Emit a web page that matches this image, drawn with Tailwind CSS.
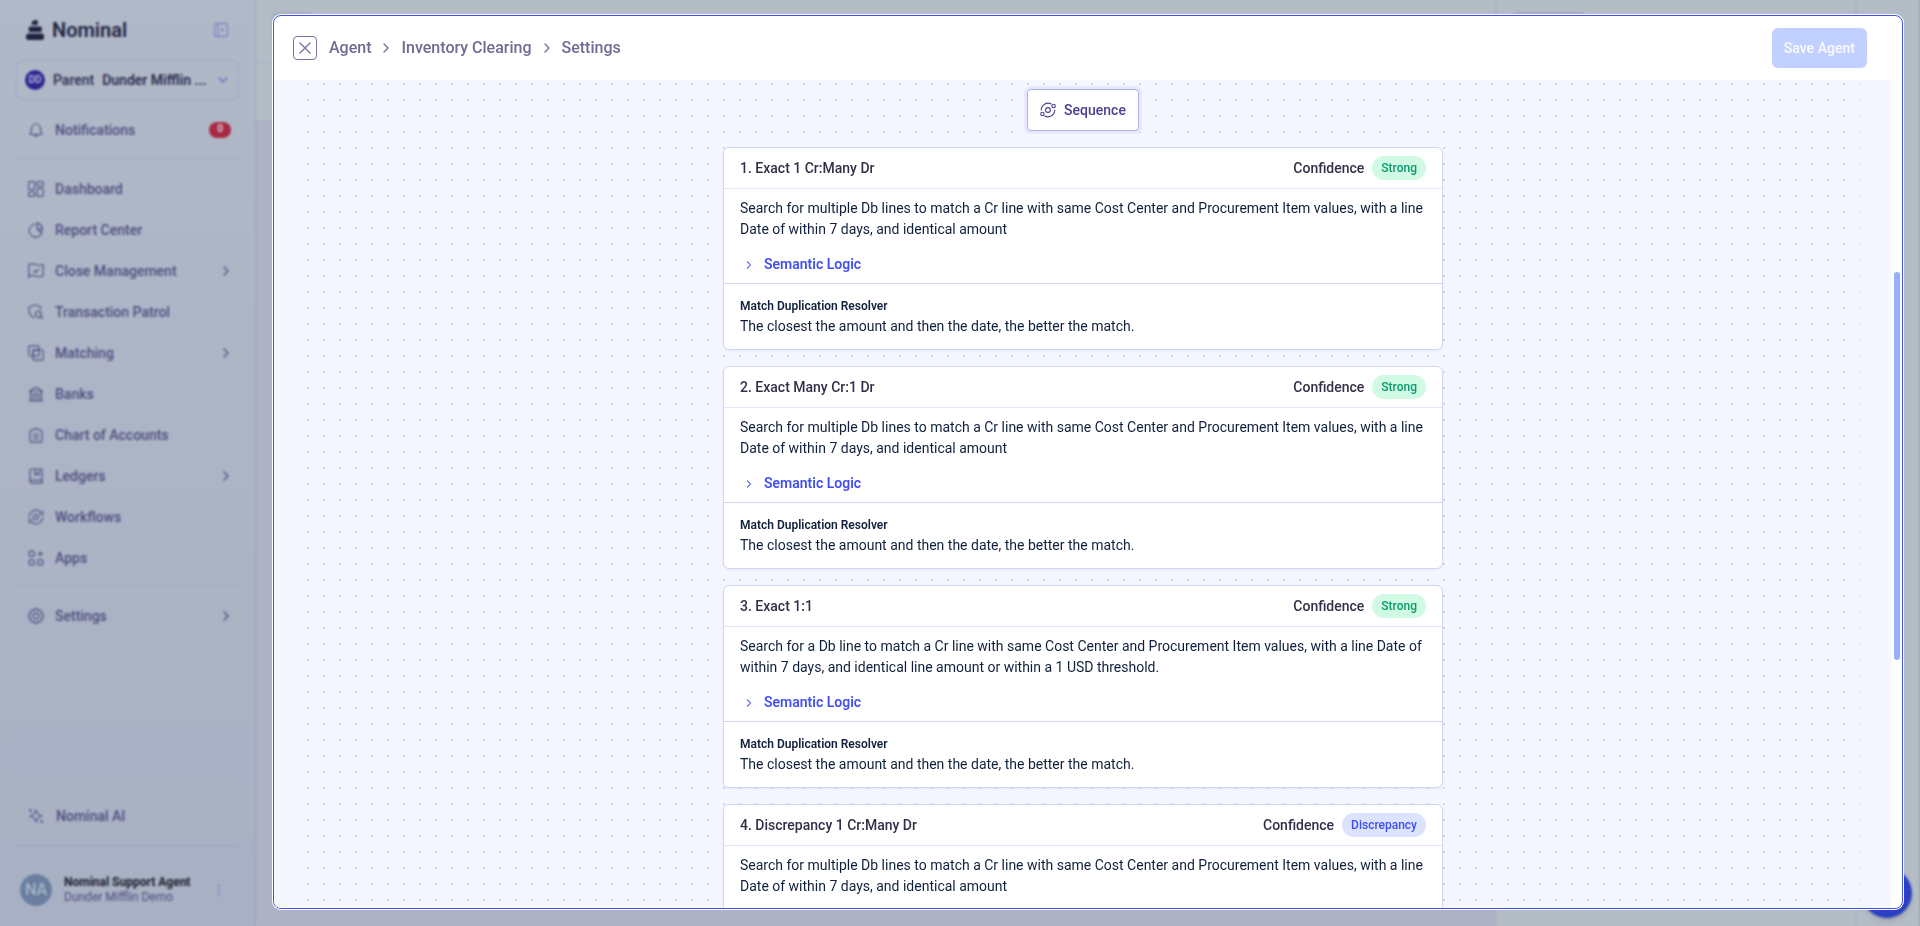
<!DOCTYPE html>
<html lang="en">
<head>
<meta charset="utf-8">
<meta name="viewport" content="width=device-width, initial-scale=1">
<title>Nominal – Agent Settings</title>
<script src="https://cdn.jsdelivr.net/npm/@tailwindcss/browser@4"></script>
</head>
<body class="relative flex h-screen overflow-hidden bg-[#b4bcc6] font-['Roboto','Liberation_Sans',sans-serif] text-sm">

<!-- Shared icon shapes -->
<svg class="hidden" aria-hidden="true">
  <symbol id="chev" viewBox="0 0 6 10"><path d="M1 1l4 4-4 4" fill="none" stroke="currentColor" stroke-width="1.3" stroke-linecap="round" stroke-linejoin="round"/></symbol>
  <symbol id="orbit" viewBox="0 0 16 16"><g fill="none" stroke="currentColor" stroke-width="1.1" stroke-linecap="round"><circle cx="8" cy="8" r="2.4"/><circle cx="13.6" cy="4" r="1.7"/><circle cx="2.4" cy="12" r="1.7"/><path d="M1.200 8A6.900 6.900 0 0 1 11.300 2M14.800 8A6.900 6.900 0 0 1 4.700 14"/></g></symbol>
</svg>

<!-- Sidebar -->
<aside class="flex w-64 shrink-0 flex-col border-r border-[#98a3c4] bg-linear-to-b from-[#b0b9c8] to-[#a8b0c3] px-4 text-[#4f4f80]">
  <div class="flex h-[60px] items-center justify-between px-2.5">
    <div class="flex items-center gap-2 text-[#21233f]">
      <svg class="h-5 w-[18px]" viewBox="0 0 18 20" fill="currentColor" aria-hidden="true"><path d="M7.200 .6 10 0Q12 0 12 2v1q0 2-2 2H7.500Q5.500 5 5.500 3.500T7.200.6z"/><rect x="2.500" y="6.500" width="13.500" height="5.500" rx="2.200"/><rect x="0" y="13.500" width="18" height="6.500" rx="2.500"/></svg>
      <span class="text-xl font-semibold">Nominal</span>
    </div>
    <button type="button" aria-label="Collapse sidebar" class="text-[#8083c4]"><svg class="size-4" viewBox="0 0 16 16" fill="none" stroke="currentColor" stroke-width="1.3"><rect x="1.500" y="1.500" width="13" height="13" rx="1.500"/><path d="M5 1.500v13M10.500 6 8.500 8l2 2"/></svg></button>
  </div>

  <button type="button" class="flex h-10 items-center rounded-md border border-[#9da7cb] px-2 text-left text-[#2c2c4c]">
    <span class="grid size-5 place-items-center rounded-full bg-[#2e2690] text-[10px] font-medium text-[#b9bede]">DD</span>
    <span class="ml-2 font-medium">Parent</span>
    <span class="ml-2 grow font-semibold">Dunder Mifflin ...</span>
    <svg class="mr-0.5 h-2 w-2.5 text-[#6668b8]" viewBox="0 0 10 8" fill="none" stroke="currentColor" stroke-width="1.400" stroke-linecap="round" aria-hidden="true"><path d="M1 2l4 4 4-4"/></svg>
  </button>

  <a href="#" class="mt-[9px] flex h-[41px] items-center gap-[11px] pr-2 pl-3 font-medium">
    <svg class="size-4" viewBox="0 0 16 16" fill="none" stroke="currentColor" stroke-width="1.200" stroke-linejoin="round" aria-hidden="true"><path d="M2 12.500c1.300-1.400 1.500-2.500 1.500-6a4.500 4.500 0 0 1 9 0c0 3.500.2 4.600 1.500 6zM6.500 13c.3 1.700 2.700 1.700 3 0"/></svg>
    <span class="grow">Notifications</span>
    <span class="grid h-4 w-[22px] place-items-center rounded-full bg-[#a82944] text-[10px] font-bold text-[#d5c6d3]">0</span>
  </a>

  <hr class="mt-2 mb-[9px] border-[#9da9c7]">

  <nav class="flex flex-col font-medium">
    <a href="#" class="flex h-[41px] items-center gap-[11px] pr-2.5 pl-3">
      <svg class="size-4" viewBox="0 0 16 16" fill="none" stroke="currentColor" stroke-width="1.200" aria-hidden="true"><rect x=".6" y=".6" width="6" height="8" rx="1"/><rect x=".6" y="11" width="6" height="4.400" rx="1"/><rect x="9.200" y=".6" width="6" height="4.400" rx="1"/><rect x="9.200" y="7.400" width="6" height="8" rx="1"/></svg>
      <span>Dashboard</span></a>
    <a href="#" class="flex h-[41px] items-center gap-[11px] pr-2.5 pl-3">
      <svg class="size-4" viewBox="0 0 16 16" fill="none" stroke="currentColor" stroke-width="1.200" stroke-linejoin="round" aria-hidden="true"><path d="M7 2.200a6.500 6.500 0 1 0 7 8.300"/><path d="M9 .8V7l4 3.500A6.200 6.200 0 0 0 9 .8zM9 7h6"/></svg>
      <span>Report Center</span></a>
    <a href="#" class="flex h-[41px] items-center gap-[11px] pr-2.5 pl-3">
      <svg class="size-4" viewBox="0 0 16 16" fill="none" stroke="currentColor" stroke-width="1.200" stroke-linejoin="round" aria-hidden="true"><path d="M.8 15.500V1.500c2.500-1 4.700-.8 7 0s4.800.8 7.400 0v11.500c-2.500.8-5 .8-7.400 0s-4.500-.8-7 0M5.500 7.500l2 2L11 5.800"/></svg>
      <span class="grow">Close Management</span><svg class="h-2.5 w-1.5"><use href="#chev"/></svg></a>
    <a href="#" class="flex h-[41px] items-center gap-[11px] pr-2.5 pl-3">
      <svg class="size-4" viewBox="0 0 16 16" fill="none" stroke="currentColor" stroke-width="1.200" stroke-linejoin="round" aria-hidden="true"><path d="M6.500 14C3 12.500 1.200 10 1.200 6.500V3L7 .8 12.800 3v2.500"/><circle cx="10.300" cy="10.300" r="3"/><path d="m12.500 12.500 2.500 2.500"/></svg>
      <span>Transaction Patrol</span></a>
    <a href="#" class="flex h-[41px] items-center gap-[11px] pr-2.5 pl-3">
      <svg class="size-4" viewBox="0 0 16 16" fill="none" stroke="currentColor" stroke-width="1.200" aria-hidden="true"><path d="M5 11H2a1.200 1.200 0 0 1-1.200-1.200V2A1.200 1.200 0 0 1 2 .8h7.800A1.200 1.200 0 0 1 11 2v3"/><rect x="5" y="5" width="10.200" height="10.200" rx="1.200"/><rect x="5" y="5" width="6" height="6"/></svg>
      <span class="grow">Matching</span><svg class="h-2.5 w-1.5"><use href="#chev"/></svg></a>
    <a href="#" class="flex h-[41px] items-center gap-[11px] pr-2.5 pl-3">
      <svg class="size-4" viewBox="0 0 16 16" fill="none" stroke="currentColor" stroke-width="1.200" stroke-linejoin="round" aria-hidden="true"><path d="M1.500 5 8 1.200 14.500 5zM1 14.800h14M2.500 5v9.500M5 7v7M8 7v7M11 7v7M13.500 5v9.500M6.500 8.500h3"/></svg>
      <span>Banks</span></a>
    <a href="#" class="flex h-[41px] items-center gap-[11px] pr-2.5 pl-3">
      <svg class="size-4" viewBox="0 0 16 16" fill="none" stroke="currentColor" stroke-width="1.200" stroke-linejoin="round" aria-hidden="true"><path d="M2 4.500 5 2.500h1.500a1.600 1.600 0 0 1 3 0H11l3 2v9.700a1 1 0 0 1-1 1H3a1 1 0 0 1-1-1zM5 7h6M5 9.500h6M5 12h6"/></svg>
      <span>Chart of Accounts</span></a>
    <a href="#" class="flex h-[41px] items-center gap-[11px] pr-2.5 pl-3">
      <svg class="size-4" viewBox="0 0 16 16" fill="none" stroke="currentColor" stroke-width="1.200" stroke-linejoin="round" aria-hidden="true"><path d="M14 12.200V1H4a2 2 0 0 0-2 2v10.500M14 12.200H3.600a1.500 1.500 0 0 0 0 3H14zM7 1v6l2-1.500L11 7V1"/></svg>
      <span class="grow">Ledgers</span><svg class="h-2.5 w-1.5"><use href="#chev"/></svg></a>
    <a href="#" class="flex h-[41px] items-center gap-[11px] pr-2.5 pl-3">
      <svg class="size-4"><use href="#orbit"/></svg>
      <span>Workflows</span></a>
    <a href="#" class="flex h-[41px] items-center gap-[11px] pr-2.5 pl-3">
      <svg class="size-4" viewBox="0 0 16 16" fill="none" stroke="currentColor" stroke-width="1.200" aria-hidden="true"><rect x="1.200" y="1.200" width="5" height="5" rx="1"/><rect x="1.200" y="9.800" width="5" height="5" rx="1"/><rect x="9.800" y="9.800" width="5" height="5" rx="1"/><path d="M12.300 1.300v5M9.800 3.800h5"/></svg>
      <span>Apps</span></a>
    <hr class="mt-[7px] mb-[9px] border-[#9da9c7]">
    <a href="#" class="flex h-[41px] items-center gap-[11px] pr-2.5 pl-3">
      <svg class="size-4" viewBox="0 0 16 16" fill="none" stroke="currentColor" stroke-width="1.200" stroke-linejoin="round" aria-hidden="true"><path d="M6.500.8h3l.6 1.900 1.900-.7 2 2-.7 1.900 1.900.6v3l-1.900.6.7 1.900-2 2-1.900-.7-.6 1.900h-3l-.6-1.900-1.900.7-2-2 .7-1.900-1.900-.6v-3l1.900-.6-.7-1.900 2-2 1.900.7z"/><circle cx="8" cy="8" r="2.800"/></svg>
      <span class="grow">Settings</span><svg class="h-2.5 w-1.5"><use href="#chev"/></svg></a>
  </nav>

  <a href="#" class="mt-auto flex h-[41px] items-center gap-3 px-3 font-medium">
    <svg class="size-4" viewBox="0 0 16 16" fill="none" stroke="currentColor" stroke-width="1.200" stroke-linejoin="round" aria-hidden="true"><path d="M8 2c.6 3.600 2 5 6 6-4 1-5.400 2.400-6 6-.6-3.600-2-5-6-6 4-1 5.400-2.400 6-6zM2.500 1v3M1 2.500h3M13.500 12v3M12 13.500h3"/></svg>
    <span>Nominal AI</span></a>
  <hr class="mt-[9px] border-[#9ba3c3]">
  <div class="flex items-center gap-3 px-1 pt-7 pb-5">
    <span class="grid size-8 place-items-center rounded-full bg-[#6a7fa0] text-base text-[#b3bfd0]">NA</span>
    <div class="grow text-xs/[15px]">
      <p class="font-bold text-[#1d1e30]">Nominal Support Agent</p>
      <p>Dunder Mifflin Demo</p>
    </div>
    <button type="button" aria-label="Account menu" class="mr-3.5 text-[#6f70c0]"><svg class="h-3 w-1" viewBox="0 0 4 12" fill="currentColor"><circle cx="2" cy="1.500" r="1"/><circle cx="2" cy="6" r="1"/><circle cx="2" cy="10.500" r="1"/></svg></button>
  </div>
</aside>

<!-- Page behind the dialog -->
<div class="flex grow" aria-hidden="true">
  <div class="flex grow flex-col">
    <div class="h-[63px] border-b border-[#a9b1c6] pt-3 pl-4"><div class="h-8 w-10 rounded bg-[#a9b1c0]"></div></div>
    <div class="h-[58px] border-b border-[#a9b1c6]"></div>
    <div class="grow bg-[#adb3c3]"></div>
  </div>
  <div class="w-[362px] border-x-2 border-[#a9b1c6] pt-3 pl-4"><div class="h-8 w-[72px] rounded bg-[#a3acc2]"></div></div>
  <div class="w-[63px] border-r border-[#9ba4bb]"></div>
</div>
<div class="absolute right-2 bottom-2 size-[50px] rounded-full bg-[#2b40c2] shadow-md"></div>

<!-- Overlay -->
<div class="absolute inset-0 backdrop-blur-[1px]"></div>

<!-- Dialog -->
<section role="dialog" aria-label="Agent settings" class="absolute top-[15px] right-[17px] bottom-[17px] left-[273px] flex flex-col overflow-hidden rounded-lg border border-[#3f50f0] bg-white ring-1 ring-white">
  <header class="flex h-16 shrink-0 items-center justify-between pr-[35px] pl-[19px]">
    <div class="flex items-center gap-3">
      <button type="button" aria-label="Close" class="grid size-6 place-items-center rounded border border-[#7c74a5] text-[#7c74a5]"><svg class="size-3" viewBox="0 0 12 12" fill="none" stroke="currentColor" stroke-width="1.400" stroke-linecap="round"><path d="M1 1l10 10M11 1 1 11"/></svg></button>
      <nav aria-label="Breadcrumb" class="flex items-center gap-3 text-base font-medium text-[#716a93]">
        <a href="#">Agent</a><svg class="h-2.5 w-1.5"><use href="#chev"/></svg>
        <a href="#">Inventory Clearing</a><svg class="h-2.5 w-1.5"><use href="#chev"/></svg>
        <a href="#">Settings</a>
      </nav>
    </div>
    <button type="button" disabled class="h-10 rounded-md bg-[#c2d0ff] px-3 font-semibold text-[#f6f8ff]">Save Agent</button>
  </header>

  <div class="flex min-h-0 grow">
    <main class="min-w-0 grow overflow-hidden bg-[#f4f7ff] pr-[31px] pl-8">
      <div class="flex flex-col items-center gap-4 bg-[conic-gradient(from_270deg_at_2px_2px,#d3d5f1_90deg,transparent_0)] bg-[size:16px_16px] bg-[position:1px_3px] pt-[9px]">
        <div class="flex h-[42px] items-center gap-2 rounded border border-[#aab1ec] bg-white px-3 font-medium text-[#4c3f8f] ring-3 ring-[#e6e9fb]">
          <svg class="size-4"><use href="#orbit"/></svg>Sequence
        </div>

        <article class="w-full max-w-[720px] rounded-md border border-[#d0d6f3] bg-white text-[#10203c] shadow-sm shadow-indigo-900/5">
          <div class="flex h-[41px] items-center gap-2 border-b border-[#e3e6fa] px-4 font-medium text-[#332f48]">
            <h2 class="grow">1. Exact 1 Cr:Many Dr</h2><span>Confidence</span>
            <span class="rounded-full bg-[#d0fae4] px-[9px] text-xs/6 text-[#0a9a6c]">Strong</span>
          </div>
          <div class="border-b border-[#d0d6f3] px-4 pt-[9px] pb-2">
            <p class="leading-[21px]">Search for multiple Db lines to match a Cr line with same Cost Center and Procurement Item values, with a line Date of within 7 days, and identical amount</p>
            <button type="button" class="mt-3.5 flex items-center gap-3 pl-1.5 leading-[21px] font-semibold text-[#4250f2]"><svg class="h-2 w-[6px]"><use href="#chev"/></svg>Semantic Logic</button>
          </div>
          <div class="px-4 pt-[13px] pb-3">
            <h3 class="text-xs/[18px] font-semibold">Match Duplication Resolver</h3>
            <p class="mt-px leading-[21px]">The closest the amount and then the date, the better the match.</p>
          </div>
        </article>

        <article class="w-full max-w-[720px] rounded-md border border-[#d0d6f3] bg-white text-[#10203c] shadow-sm shadow-indigo-900/5">
          <div class="flex h-[41px] items-center gap-2 border-b border-[#e3e6fa] px-4 font-medium text-[#332f48]">
            <h2 class="grow">2. Exact Many Cr:1 Dr</h2><span>Confidence</span>
            <span class="rounded-full bg-[#d0fae4] px-[9px] text-xs/6 text-[#0a9a6c]">Strong</span>
          </div>
          <div class="border-b border-[#d0d6f3] px-4 pt-[9px] pb-2">
            <p class="leading-[21px]">Search for multiple Db lines to match a Cr line with same Cost Center and Procurement Item values, with a line Date of within 7 days, and identical amount</p>
            <button type="button" class="mt-3.5 flex items-center gap-3 pl-1.5 leading-[21px] font-semibold text-[#4250f2]"><svg class="h-2 w-[6px]"><use href="#chev"/></svg>Semantic Logic</button>
          </div>
          <div class="px-4 pt-[13px] pb-3">
            <h3 class="text-xs/[18px] font-semibold">Match Duplication Resolver</h3>
            <p class="mt-px leading-[21px]">The closest the amount and then the date, the better the match.</p>
          </div>
        </article>

        <article class="w-full max-w-[720px] rounded-md border border-[#d0d6f3] bg-white text-[#10203c] shadow-sm shadow-indigo-900/5">
          <div class="flex h-[41px] items-center gap-2 border-b border-[#e3e6fa] px-4 font-medium text-[#332f48]">
            <h2 class="grow">3. Exact 1:1</h2><span>Confidence</span>
            <span class="rounded-full bg-[#d0fae4] px-[9px] text-xs/6 text-[#0a9a6c]">Strong</span>
          </div>
          <div class="border-b border-[#d0d6f3] px-4 pt-[9px] pb-2">
            <p class="leading-[21px]">Search for a Db line to match a Cr line with same Cost Center and Procurement Item values, with a line Date of within 7 days, and identical line amount or within a 1 USD threshold.</p>
            <button type="button" class="mt-3.5 flex items-center gap-3 pl-1.5 leading-[21px] font-semibold text-[#4250f2]"><svg class="h-2 w-[6px]"><use href="#chev"/></svg>Semantic Logic</button>
          </div>
          <div class="px-4 pt-[13px] pb-3">
            <h3 class="text-xs/[18px] font-semibold">Match Duplication Resolver</h3>
            <p class="mt-px leading-[21px]">The closest the amount and then the date, the better the match.</p>
          </div>
        </article>

        <article class="w-full max-w-[720px] rounded-md border border-[#d0d6f3] bg-white text-[#10203c] shadow-sm shadow-indigo-900/5">
          <div class="flex h-[41px] items-center gap-2 border-b border-[#e3e6fa] px-4 font-medium text-[#332f48]">
            <h2 class="grow">4. Discrepancy 1 Cr:Many Dr</h2><span>Confidence</span>
            <span class="rounded-full bg-[#dbe3ff] px-[9px] text-xs/6 text-[#3f50f0]">Discrepancy</span>
          </div>
          <div class="px-4 pt-[9px] pb-20">
            <p class="leading-[21px]">Search for multiple Db lines to match a Cr line with same Cost Center and Procurement Item values, with a line Date of within 7 days, and identical amount</p>
          </div>
        </article>
      </div>
    </main>
    <!-- Scrollbar -->
    <div class="flex w-[11px] shrink-0 flex-col items-center pt-48" aria-hidden="true">
      <div class="h-[61%] w-1.5 rounded-full bg-[#98aff9]"></div>
    </div>
  </div>
</section>
</body>
</html>
